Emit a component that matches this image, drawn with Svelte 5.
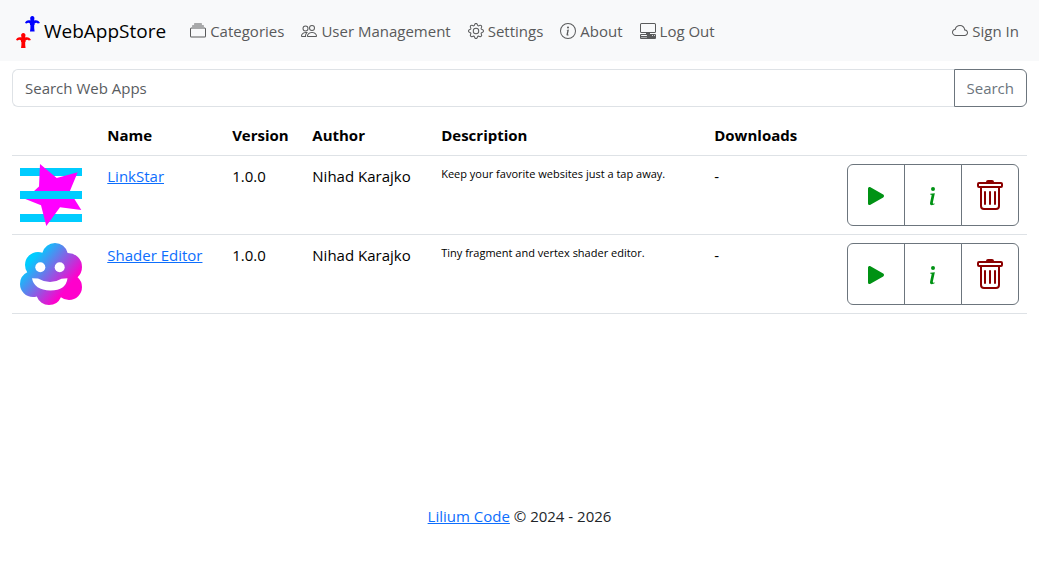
<script>
    let query = '';

    const icons = {
        collection: 'M2.5 3.5a.5.5 0 0 1 0-1h11a.5.5 0 0 1 0 1h-11zm2-2a.5.5 0 0 1 0-1h7a.5.5 0 0 1 0 1h-7zM0 13a1.5 1.5 0 0 0 1.5 1.5h13A1.5 1.5 0 0 0 16 13V6a1.5 1.5 0 0 0-1.5-1.5h-13A1.5 1.5 0 0 0 0 6v7zm1.5.5A.5.5 0 0 1 1 13V6a.5.5 0 0 1 .5-.5h13a.5.5 0 0 1 .5.5v7a.5.5 0 0 1-.5.5h-13z',
        people: 'M15 14s1 0 1-1-1-4-5-4-5 3-5 4 1 1 1 1h8Zm-7.978-1A.261.261 0 0 1 7 12.996c.001-.264.167-1.03.76-1.72C8.312 10.629 9.282 10 11 10c1.717 0 2.687.63 3.24 1.276.593.69.758 1.457.76 1.72l-.008.002a.274.274 0 0 1-.014.002H7.022ZM11 7a2 2 0 1 0 0-4 2 2 0 0 0 0 4Zm3-2a3 3 0 1 1-6 0 3 3 0 0 1 6 0ZM6.936 9.28a5.88 5.88 0 0 0-1.23-.247A7.35 7.35 0 0 0 5 9c-4 0-5 3-5 4 0 .667.333 1 1 1h4.216A2.238 2.238 0 0 1 5 13c0-1.01.377-2.042 1.09-2.904.243-.294.526-.569.846-.816ZM4.92 10A5.493 5.493 0 0 0 4 13H1c0-.26.164-1.03.76-1.724.545-.636 1.492-1.256 3.16-1.275ZM1.5 5.5a3 3 0 1 1 6 0 3 3 0 0 1-6 0Zm3-2a2 2 0 1 0 0 4 2 2 0 0 0 0-4Z',
        gear: 'M8 4.754a3.246 3.246 0 1 0 0 6.492 3.246 3.246 0 0 0 0-6.492zM5.754 8a2.246 2.246 0 1 1 4.492 0 2.246 2.246 0 0 1-4.492 0z M9.796 1.343c-.527-1.79-3.065-1.79-3.592 0l-.094.319a.873.873 0 0 1-1.255.52l-.292-.16c-1.64-.892-3.433.902-2.54 2.541l.159.292a.873.873 0 0 1-.52 1.255l-.319.094c-1.79.527-1.79 3.065 0 3.592l.319.094a.873.873 0 0 1 .52 1.255l-.16.292c-.892 1.64.901 3.434 2.541 2.54l.292-.159a.873.873 0 0 1 1.255.52l.094.319c.527 1.79 3.065 1.79 3.592 0l.094-.319a.873.873 0 0 1 1.255-.52l.292.16c1.64.893 3.434-.902 2.54-2.541l-.159-.292a.873.873 0 0 1 .52-1.255l.319-.094c1.79-.527 1.79-3.065 0-3.592l-.319-.094a.873.873 0 0 1-.52-1.255l.16-.292c.893-1.64-.902-3.433-2.541-2.54l-.292.159a.873.873 0 0 1-1.255-.52l-.094-.319zm-2.633.283c.246-.835 1.428-.835 1.674 0l.094.319a1.873 1.873 0 0 0 2.693 1.115l.291-.16c.764-.415 1.6.42 1.184 1.185l-.159.292a1.873 1.873 0 0 0 1.116 2.692l.318.094c.835.246.835 1.428 0 1.674l-.319.094a1.873 1.873 0 0 0-1.115 2.693l.16.291c.415.764-.42 1.6-1.185 1.184l-.291-.159a1.873 1.873 0 0 0-2.693 1.116l-.094.318c-.246.835-1.428.835-1.674 0l-.094-.319a1.873 1.873 0 0 0-2.692-1.115l-.292.16c-.764.415-1.6-.42-1.184-1.185l.159-.291A1.873 1.873 0 0 0 1.945 8.93l-.319-.094c-.835-.246-.835-1.428 0-1.674l.319-.094A1.873 1.873 0 0 0 3.06 4.377l-.16-.292c-.415-.764.42-1.6 1.185-1.184l.292.159a1.873 1.873 0 0 0 2.692-1.115l.094-.319z',
        infoCircle: 'M8 15A7 7 0 1 1 8 1a7 7 0 0 1 0 14zm0 1A8 8 0 1 0 8 0a8 8 0 0 0 0 16z m.93-9.412-2.29.287-.082.38.45.083c.294.07.352.176.288.469l-.738 3.468c-.194.897.105 1.319.808 1.319.545 0 1.178-.252 1.465-.598l.088-.416c-.2.176-.492.246-.686.246-.275 0-.375-.193-.304-.533L8.93 6.588zM9 4.5a1 1 0 1 1-2 0 1 1 0 0 1 2 0z',
        display: 'M1.5 0A1.5 1.5 0 0 0 0 1.5v7A1.5 1.5 0 0 0 1.5 10H6v1H1a1 1 0 0 0-1 1v3a1 1 0 0 0 1 1h14a1 1 0 0 0 1-1v-3a1 1 0 0 0-1-1h-5v-1h4.5A1.5 1.5 0 0 0 16 8.5v-7A1.5 1.5 0 0 0 14.5 0h-13Zm0 1h13a.5.5 0 0 1 .5.5v7a.5.5 0 0 1-.5.5h-13a.5.5 0 0 1-.5-.5v-7a.5.5 0 0 1 .5-.5ZM12 12.5a.5.5 0 1 1 1 0 .5.5 0 0 1-1 0Zm2 0a.5.5 0 1 1 1 0 .5.5 0 0 1-1 0ZM1.5 12h5a.5.5 0 0 1 0 1h-5a.5.5 0 0 1 0-1ZM1 14.25a.25.25 0 0 1 .25-.25h5.5a.25.25 0 1 1 0 .5h-5.5a.25.25 0 0 1-.25-.25Z',
        cloud: 'M4.406 3.342A5.53 5.53 0 0 1 8 2c2.69 0 4.923 2 5.166 4.579C14.758 6.804 16 8.137 16 9.773 16 11.569 14.502 13 12.687 13H3.781C1.708 13 0 11.366 0 9.318c0-1.763 1.266-3.223 2.942-3.593.143-.863.698-1.723 1.464-2.383zm.653.757c-.757.653-1.153 1.44-1.153 2.056v.448l-.445.049C2.064 6.805 1 7.952 1 9.318 1 10.785 2.23 12 3.781 12h8.906C13.98 12 15 10.988 15 9.773c0-1.216-1.02-2.228-2.313-2.228h-.5v-.5C12.188 4.825 10.328 3 8 3a4.53 4.53 0 0 0-2.941 1.1z',
        play: 'm11.596 8.697-6.363 3.692c-.54.313-1.233-.066-1.233-.697V4.308c0-.63.692-1.01 1.233-.696l6.363 3.692a.802.802 0 0 1 0 1.393z',
        info: 'm8.93 6.588-2.29.287-.082.38.45.083c.294.07.352.176.288.469l-.738 3.468c-.194.897.105 1.319.808 1.319.545 0 1.178-.252 1.465-.598l.088-.416c-.2.176-.492.246-.686.246-.275 0-.375-.193-.304-.533L8.93 6.588zM9 4.5a1 1 0 1 1-2 0 1 1 0 0 1 2 0z',
        trash: 'M5.5 5.5A.5.5 0 0 1 6 6v6a.5.5 0 0 1-1 0V6a.5.5 0 0 1 .5-.5Zm2.5 0a.5.5 0 0 1 .5.5v6a.5.5 0 0 1-1 0V6a.5.5 0 0 1 .5-.5Zm3 .5a.5.5 0 0 0-1 0v6a.5.5 0 0 0 1 0V6Z M14.5 3a1 1 0 0 1-1 1H13v9a2 2 0 0 1-2 2H5a2 2 0 0 1-2-2V4h-.5a1 1 0 0 1-1-1V2a1 1 0 0 1 1-1H6a1 1 0 0 1 1-1h2a1 1 0 0 1 1 1h3.5a1 1 0 0 1 1 1v1ZM4.118 4 4 4.059V13a1 1 0 0 0 1 1h6a1 1 0 0 0 1-1V4.059L11.882 4H4.118ZM2.5 3h11V2h-11v1Z'
    };

    const links = [
        { icon: 'collection', label: 'Categories' },
        { icon: 'people', label: 'User Management' },
        { icon: 'gear', label: 'Settings' },
        { icon: 'infoCircle', label: 'About' },
        { icon: 'display', label: 'Log Out' }
    ];

    const apps = [
        { id: 'linkstar', name: 'LinkStar', version: '1.0.0', author: 'Nihad Karajko', description: 'Keep your favorite websites just a tap away.', downloads: '-' },
        { id: 'shader', name: 'Shader Editor', version: '1.0.0', author: 'Nihad Karajko', description: 'Tiny fragment and vertex shader editor.', downloads: '-' }
    ];

    const search = () => {
        query = query.trim();
    }
</script>

{#snippet icon(name, size)}
    <svg width={size} height={size} viewBox="0 0 16 16" fill="currentColor" aria-hidden="true"><path d={icons[name]} /></svg>
{/snippet}

{#snippet lily()}
    <path d="M7.3 0a2.2 2.2 0 0 1 2 3L9.2 4.4C11.6 3.6 14.2 4.6 15 7L12.8 7.6C12 6.6 11 6.6 9.6 7.4V9H9.2V12L9.6 15.4H5L5.4 12V9H5V7.4C3.6 6.6 2.6 6.6 1.8 7.6L0 7C.4 4.6 3 3.6 5.4 4.4L5.3 3A2.2 2.2 0 0 1 7.3 0Z" />
{/snippet}

<header>
    <nav>
        <a class="brand" href="#home">
            <svg width="32" height="32" viewBox="0 0 32 32" aria-hidden="true">
                <g fill="#00f" transform="translate(13 0)">{@render lily()}</g>
                <g fill="#f00" transform="translate(4 17)">{@render lily()}</g>
            </svg>
            WebAppStore
        </a>
        <ul>
            {#each links as link}
                <li><a class="navLink" href="#{link.icon}">{@render icon(link.icon, 16)}{link.label}</a></li>
            {/each}
        </ul>
        <a class="navLink signIn" href="#signin">{@render icon('cloud', 16)}Sign In</a>
    </nav>
</header>

<main>
    <form class="search" on:submit|preventDefault={search}>
        <input bind:value={query} type="text" placeholder="Search Web Apps" aria-label="Search Web Apps" />
        <button type="submit">Search</button>
    </form>

    <table>
        <colgroup>
            <col class="colIcon" />
            <col class="colName" />
            <col class="colVersion" />
            <col class="colAuthor" />
            <col class="colDescription" />
            <col class="colDownloads" />
            <col />
        </colgroup>
        <thead>
            <tr>
                <th></th>
                <th>Name</th>
                <th>Version</th>
                <th>Author</th>
                <th>Description</th>
                <th>Downloads</th>
                <th></th>
            </tr>
        </thead>
        <tbody>
            {#each apps as app}
                <tr>
                    <td>
                        {#if app.id === 'linkstar'}
                            <svg class="appIcon" viewBox="0 0 62 62" aria-hidden="true">
                                <path fill="#0cf" d="M0 4h62v8H0zM0 50h62v8H0z" />
                                <path fill="#f0f" d="M20 0 36.7 14 57.7 8.3 49.7 27.5 61.3 46 40 43.2 26.3 62 21 41.3 5.3 35 19 22.5Z" />
                                <path fill="#0cf" d="M0 27h62v8H0z" />
                            </svg>
                        {:else}
                            <svg class="appIcon" viewBox="0 0 62 62" aria-hidden="true">
                                <defs>
                                    <linearGradient id="shade" gradientUnits="userSpaceOnUse" x1="12" y1="16" x2="47" y2="45">
                                        <stop offset="0" stop-color="#0cf" />
                                        <stop offset="1" stop-color="#f0c" />
                                    </linearGradient>
                                    <clipPath id="cloud">
                                        <circle cx="35" cy="13" r="13" />
                                        <circle cx="48" cy="24" r="14" />
                                        <circle cx="49" cy="44" r="13" />
                                        <circle cx="29" cy="49" r="13" />
                                        <circle cx="13" cy="41" r="13" />
                                        <circle cx="18" cy="22" r="13" />
                                        <circle cx="32" cy="32" r="20" />
                                    </clipPath>
                                </defs>
                                <rect width="62" height="62" fill="url(#shade)" clip-path="url(#cloud)" />
                                <g fill="#fff">
                                    <circle cx="20.3" cy="24.3" r="5" />
                                    <circle cx="39.7" cy="24.3" r="5" />
                                    <path d="M12 35.3 18 35.5Q30 42.5 41.5 35.7L47.5 35.3Q46 47.5 30.5 47.5 14 47 12 35.3Z" />
                                </g>
                            </svg>
                        {/if}
                    </td>
                    <td><a href="#{app.id}">{app.name}</a></td>
                    <td>{app.version}</td>
                    <td>{app.author}</td>
                    <td class="description">{app.description}</td>
                    <td>{app.downloads}</td>
                    <td>
                        <div class="actions">
                            <button type="button" aria-label="Run {app.name}">{@render icon('play', 32)}</button>
                            <button type="button" aria-label="About {app.name}">{@render icon('info', 32)}</button>
                            <button type="button" class="delete" aria-label="Delete {app.name}">{@render icon('trash', 32)}</button>
                        </div>
                    </td>
                </tr>
            {/each}
        </tbody>
    </table>
</main>

<footer><a href="#lilium">Lilium Code</a> © 2024 - 2026</footer>

<style>
    :global(body) {
        background: #fff;
    }

    :global(#app) {
        display: flex;
        flex-direction: column;
        min-height: 100vh;
        font-family: "Segoe UI", "Open Sans", "Noto Sans", sans-serif;
        font-size: 15px;
        line-height: 24px;
        color: #000;
    }

    * {
        box-sizing: border-box;
    }

    a {
        color: #0d6efd;
    }

    svg {
        display: block;
        flex-shrink: 0;
    }

    header {
        background: #f8f9fa;
    }

    nav {
        display: flex;
        align-items: center;
        min-height: 61px;
        padding: 0 12px;
    }

    .brand {
        display: flex;
        align-items: center;
        margin-right: 16px;
        font-size: 19px;
        color: #000;
        text-decoration: none;
    }

    .brand svg {
        margin-top: 2px;
    }

    ul {
        display: flex;
        flex: 1;
        gap: 1px;
        margin: 0;
        padding: 0;
        list-style: none;
    }

    .navLink {
        display: flex;
        align-items: center;
        gap: 4px;
        padding: 8px;
        color: #595a5b;
        text-decoration: none;
    }

    main {
        flex: 1;
        padding: 8px 12px;
    }

    .search {
        display: flex;
        margin-bottom: 8px;
    }

    .search input,
    .search button {
        height: 38px;
        padding: 6px 12px;
        font: inherit;
        background: #fff;
    }

    .search input {
        flex: 1;
        min-width: 0;
        border: 1px solid #dee2e6;
        border-right: 0;
        border-radius: 6px 0 0 6px;
        color: #212529;
    }

    .search input::placeholder {
        color: #595c5f;
        opacity: 1;
    }

    .search button {
        border: 1px solid #6c757d;
        border-radius: 0 6px 6px 0;
        color: #6c757d;
    }

    table {
        width: 100%;
        table-layout: fixed;
        border-collapse: collapse;
    }

    .colIcon {
        width: 8.6%;
    }

    .colName {
        width: 12.3%;
    }

    .colVersion {
        width: 7.9%;
    }

    .colAuthor {
        width: 12.7%;
    }

    .colDescription {
        width: 26.9%;
    }

    .colDownloads {
        width: 13.1%;
    }

    th,
    td {
        padding: 8px;
        border-bottom: 1px solid #dee2e6;
        text-align: left;
        vertical-align: top;
    }

    .description {
        font-size: 11px;
        line-height: 20px;
    }

    .appIcon {
        width: 62px;
        height: 62px;
    }

    .actions {
        display: flex;
        justify-content: flex-end;
    }

    .actions button {
        display: flex;
        align-items: center;
        justify-content: center;
        width: 58px;
        height: 62px;
        padding: 2px 0 0;
        border: 1px solid #6c757d;
        background: #fff;
        color: #009214;
    }

    .actions button + button {
        margin-left: -1px;
    }

    .actions button:first-child {
        border-radius: 6px 0 0 6px;
    }

    .actions button:last-child {
        border-radius: 0 6px 6px 0;
    }

    .actions .delete {
        color: #8b0000;
    }

    footer {
        padding: 0 12px 39px;
        text-align: center;
        color: #212529;
    }
</style>
